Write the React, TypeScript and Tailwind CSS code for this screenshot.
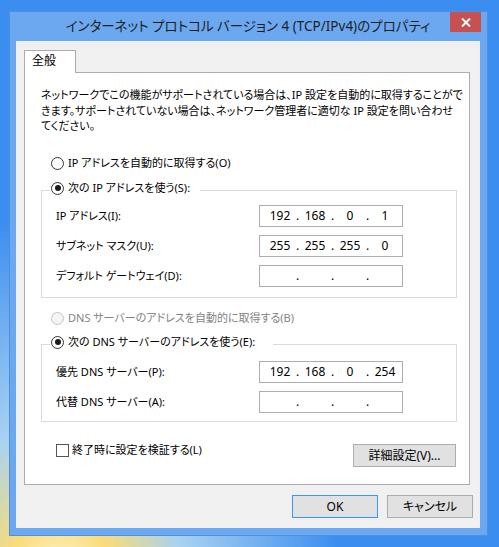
import React from 'react';

const FONT = "font-['Noto_Sans','Noto_Sans_CJK_JP',sans-serif] [font-feature-settings:'palt']";

function Radio({ checked, disabled }: { checked?: boolean; disabled?: boolean }) {
  return (
    <span
      className={`flex items-center justify-center w-[13px] h-[13px] rounded-full border ${
        disabled ? 'border-[#c4c4c4] bg-[#f4f4f4]' : 'border-[#333333] bg-white'
      }`}
    >
      {checked && <span className="w-[6px] h-[6px] rounded-full bg-[#1a1a1a]" />}
    </span>
  );
}

function IpBox({ parts }: { parts: string[] }) {
  return (
    <div className="flex items-center w-[144px] h-[22px] border border-[#abadb3] bg-white pl-[6px] text-[12px] leading-none text-black">
      {parts.map((p, i) => (
        <div key={i} className="flex items-center">
          <span className="w-[28px] text-center">{p}</span>
          {i < 3 && <span className="w-[7px] text-center">.</span>}
        </div>
      ))}
    </div>
  );
}

function Row({ label, parts }: { label: string; parts: string[] }) {
  return (
    <div className="flex items-center h-[22px]">
      <span className="w-[217px] pl-[14px]">{label}</span>
      <IpBox parts={parts} />
    </div>
  );
}

export default function App() {
  return (
    <div
      className={`w-[499px] h-[547px] overflow-hidden pl-[9px] pt-[11px] text-black bg-[radial-gradient(ellipse_at_12%_108%,#fffbe6_0%,#f9dc78_9%,#a9d2f2_20%,#3b8ef0_45%)] ${FONT}`}
    >
      <div className="w-[479px] h-[525px] border border-[#4e8fdd] bg-[#6ba8f0] pl-[6px] pr-[7px]">
        {/* title bar */}
        <div className="relative h-[29px] flex items-center justify-center">
          <span className="text-[13.5px] leading-none text-[#1e1e1e] whitespace-nowrap">
            インターネット プロトコル バージョン 4 (TCP/IPv4)のプロパティ
          </span>
          <div className="absolute right-[-1px] top-0 w-[31px] h-[20px] bg-[#c75050] flex items-center justify-center">
            <svg width="10" height="9" viewBox="0 0 10 9">
              <path d="M1 0.5 L9 8.5 M9 0.5 L1 8.5" stroke="#ffffff" strokeWidth="2" />
            </svg>
          </div>
        </div>

        {/* client */}
        <div className="h-[487px] bg-[#f0f0f0] pl-[8px] pr-[7px] pt-[9px] text-[11px]">
          <div className="relative z-10 -mb-px w-[52px] h-[23px] bg-white border-l border-t border-r border-[#acacac] pl-[7px] pt-[2px] leading-[16px] text-[12px]">
            全般
          </div>
          <div className="w-[446px] h-[413px] bg-white border border-[#acacac] pl-[16px] pt-[14px]">
            <div className="leading-[15.5px] whitespace-nowrap">
              <div>ネットワークでこの機能がサポートされている場合は、IP 設定を自動的に取得することがで</div>
              <div>きます。サポートされていない場合は、ネットワーク管理者に適切な IP 設定を問い合わせ</div>
              <div>てください。</div>
            </div>

            <div className="mt-[21.5px] ml-[10px] h-[16px] flex items-center gap-[4px]">
              <Radio />
              <span>IP アドレスを自動的に取得する(O)</span>
            </div>

            <fieldset className="mt-[9px] w-[416px] border border-[#dcdcdc]">
              <legend className="ml-[8px] pl-[1px] pr-[10px] h-[20px]">
                <div className="h-[16px] flex items-center gap-[4px]">
                  <Radio checked />
                  <span>次の IP アドレスを使う(S):</span>
                </div>
              </legend>
              <div className="pt-[5px] pb-[10px] flex flex-col gap-[8px]">
                <Row label="IP アドレス(I):" parts={['192', '168', '0', '1']} />
                <Row label="サブネット マスク(U):" parts={['255', '255', '255', '0']} />
                <Row label="デフォルト ゲートウェイ(D):" parts={['', '', '', '']} />
              </div>
            </fieldset>

            <div className="mt-[12px] ml-[10px] h-[16px] flex items-center gap-[4px] text-[#838383]">
              <Radio disabled />
              <span>DNS サーバーのアドレスを自動的に取得する(B)</span>
            </div>

            <fieldset className="mt-[8px] w-[416px] border border-[#dcdcdc]">
              <legend className="ml-[8px] pl-[1px] pr-[18px] h-[20px]">
                <div className="h-[16px] flex items-center gap-[4px]">
                  <Radio checked />
                  <span>次の DNS サーバーのアドレスを使う(E):</span>
                </div>
              </legend>
              <div className="pt-[7px] pb-[8px] flex flex-col gap-[8px]">
                <Row label="優先 DNS サーバー(P):" parts={['192', '168', '0', '254']} />
                <Row label="代替 DNS サーバー(A):" parts={['', '', '', '']} />
              </div>
            </fieldset>

            <div className="mt-[20px] w-[415px] flex items-start">
              <div className="ml-[15px] h-[16px] flex items-center gap-[3px]">
                <span className="w-[13px] h-[13px] border border-[#555555] bg-white" />
                <span>終了時に設定を検証する(L)</span>
              </div>
              <button className="ml-auto mt-[2px] w-[103px] h-[23px] border border-[#adadad] bg-[#e1e1e1] leading-none text-[12px]">
                詳細設定(V)...
              </button>
            </div>
          </div>

          <div className="mt-[10px] flex justify-end gap-[9px] text-[12px]">
            <button className="w-[86px] h-[23px] border border-[#3399ff] bg-[#e1e1e1] leading-none">OK</button>
            <button className="w-[86px] h-[23px] border border-[#adadad] bg-[#e1e1e1] leading-none">キャンセル</button>
          </div>
        </div>
      </div>
    </div>
  );
}
